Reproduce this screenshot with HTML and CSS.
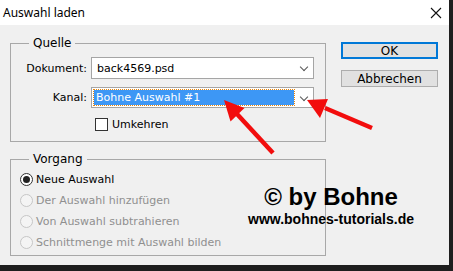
FILE: index.html
```html
<!DOCTYPE html>
<html lang="de">
  <head>
    <meta charset="UTF-8" />
    <title>Auswahl laden</title>
    <link rel="stylesheet" href="styles.css">
  </head>
  <body>
    <div class="dialog">
      <!-- Titelleiste -->
      <div class="titlebar">
        <span class="title">Auswahl laden</span>
        <svg class="close" width="12" height="12" viewBox="0 0 12 12">
          <path d="M1 1 L11 11 M11 1 L1 11" stroke="#111" stroke-width="1.1" fill="none" />
        </svg>
      </div>

      <div class="main">
        <div class="left">
          <fieldset class="group quelle">
            <legend>Quelle</legend>
            <div class="form-grid">
              <label class="lbl">Dokument:</label>
              <div class="select">
                <span class="value">back4569.psd</span>
                <span class="chev"></span>
              </div>
              <label class="lbl">Kanal:</label>
              <div class="select kanal">
                <span class="value selected">Bohne Auswahl #1</span>
                <span class="chev"></span>
              </div>
            </div>
            <div class="check-row">
              <span class="checkbox"></span>
              <span>Umkehren</span>
            </div>
          </fieldset>

          <fieldset class="group vorgang">
            <legend>Vorgang</legend>
            <div class="radio-row">
              <span class="radio checked"></span>
              <span>Neue Auswahl</span>
            </div>
            <div class="radio-row disabled">
              <span class="radio"></span>
              <span>Der Auswahl hinzufügen</span>
            </div>
            <div class="radio-row disabled">
              <span class="radio"></span>
              <span>Von Auswahl subtrahieren</span>
            </div>
            <div class="radio-row disabled">
              <span class="radio"></span>
              <span>Schnittmenge mit Auswahl bilden</span>
            </div>
          </fieldset>
        </div>

        <div class="buttons">
          <button class="btn default">OK</button>
          <button class="btn">Abbrechen</button>
        </div>
      </div>

      <!-- Wasserzeichen -->
      <div class="watermark">
        <div class="wm-big">© by Bohne</div>
        <div class="wm-small">www.bohnes-tutorials.de</div>
      </div>

      <!-- Rote Pfeile -->
      <svg class="arrows" width="449" height="265" viewBox="0 0 449 265">
        <line x1="237" y1="114" x2="273" y2="153" stroke="#f20d0d" stroke-width="4.5" />
        <polygon points="224,100 230.5,121.5 244.5,108" fill="#f20d0d" />
        <line x1="325" y1="108" x2="372" y2="128" stroke="#f20d0d" stroke-width="4.5" />
        <polygon points="307,100 320,118 328,99" fill="#f20d0d" />
      </svg>
    </div>
  </body>
</html>
```

FILE: styles.css
```css
/* Grundlayout */
body {
  margin: 0;
  background-color: #1e1e1e;
  font-family: 'DejaVu Sans', Tahoma, sans-serif;
  font-size: 11px;
  color: #000;
}

.dialog {
  position: relative;
  width: 449px;
  height: 265px;
  background-color: #f0f0f0;
  overflow: hidden;
}

/* Titelleiste */
.titlebar {
  height: 25px;
  background-color: #ffffff;
  display: flex;
  align-items: center;
  justify-content: space-between;
  padding: 0 7px 0 3px;
  box-sizing: border-box;
}

.title {
  font-family: 'Noto Sans', 'Segoe UI', sans-serif;
  font-size: 12px;
}

.main {
  display: flex;
  padding: 11px 0 0 10px;
}

.left {
  width: 316px;
}

/* Gruppenrahmen */
.group {
  margin: 0;
  padding: 0;
  border: 1px solid #a8a8a8;
}

.group legend {
  margin-left: 18px;
  padding: 0 4px;
  font-size: 12px;
  line-height: 15px;
}

.quelle {
  height: 106px;
  box-sizing: border-box;
}

.form-grid {
  display: grid;
  grid-template-columns: 76px 223px;
  column-gap: 4px;
  row-gap: 8px;
  align-items: center;
  margin-top: 6px;
}

.lbl {
  text-align: right;
}

.select {
  position: relative;
  height: 22px;
  background: #ffffff;
  border: 1px solid #a5a5a5;
  box-sizing: border-box;
  display: flex;
  align-items: center;
  padding-left: 5px;
}

.select.kanal {
  height: 21px;
  padding-left: 2px;
}

.value.selected {
  background-color: #3d97f5;
  color: #ffffff;
  width: 200px;
  height: 15px;
  line-height: 15px;
  padding-left: 2px;
  box-sizing: border-box;
  outline: 1px dotted #e8860c;
}

.chev {
  position: absolute;
  right: 6px;
  top: 6px;
  width: 5px;
  height: 5px;
  border-right: 1px solid #555;
  border-bottom: 1px solid #555;
  transform: rotate(45deg);
}

.check-row {
  display: flex;
  align-items: center;
  gap: 4px;
  margin: 10px 0 0 84px;
}

.checkbox {
  width: 11px;
  height: 11px;
  border: 1px solid #333;
  background: #fff;
}

.vorgang {
  margin-top: 10px;
  height: 104px;
  box-sizing: border-box;
  padding-top: 2px;
}

.radio-row {
  display: flex;
  align-items: center;
  gap: 3px;
  height: 21px;
  padding-left: 9px;
}

.radio-row.disabled {
  color: #8f8f8f;
}

.radio {
  width: 11px;
  height: 11px;
  border: 1px solid #333;
  border-radius: 50%;
  background: #fff;
  position: relative;
}

.radio.checked::after {
  content: '';
  position: absolute;
  left: 2px;
  top: 2px;
  width: 7px;
  height: 7px;
  border-radius: 50%;
  background: #222;
}

.radio-row.disabled .radio {
  border-color: #c6c6c6;
  background: #f4f4f4;
}

/* Knöpfe rechts */
.buttons {
  display: flex;
  flex-direction: column;
  gap: 11px;
  margin: 6px 0 0 15px;
}

.btn {
  width: 97px;
  height: 17px;
  padding: 0;
  font-family: 'DejaVu Sans', Tahoma, sans-serif;
  font-size: 12px;
  line-height: 14px;
  background-color: #e1e1e1;
  border: 1px solid #adadad;
  color: #000;
}

.btn.default {
  border: 2px solid #0078d7;
}

/* Wasserzeichen */
.watermark {
  position: absolute;
  left: 230px;
  top: 183px;
  width: 202px;
  text-align: center;
  font-family: 'Liberation Sans', Arial, sans-serif;
  font-weight: bold;
  color: #000;
}

.wm-big {
  font-size: 24px;
  line-height: 28px;
}

.wm-small {
  font-size: 14px;
  line-height: 16px;
}

.arrows {
  position: absolute;
  left: 0;
  top: 0;
}
```
